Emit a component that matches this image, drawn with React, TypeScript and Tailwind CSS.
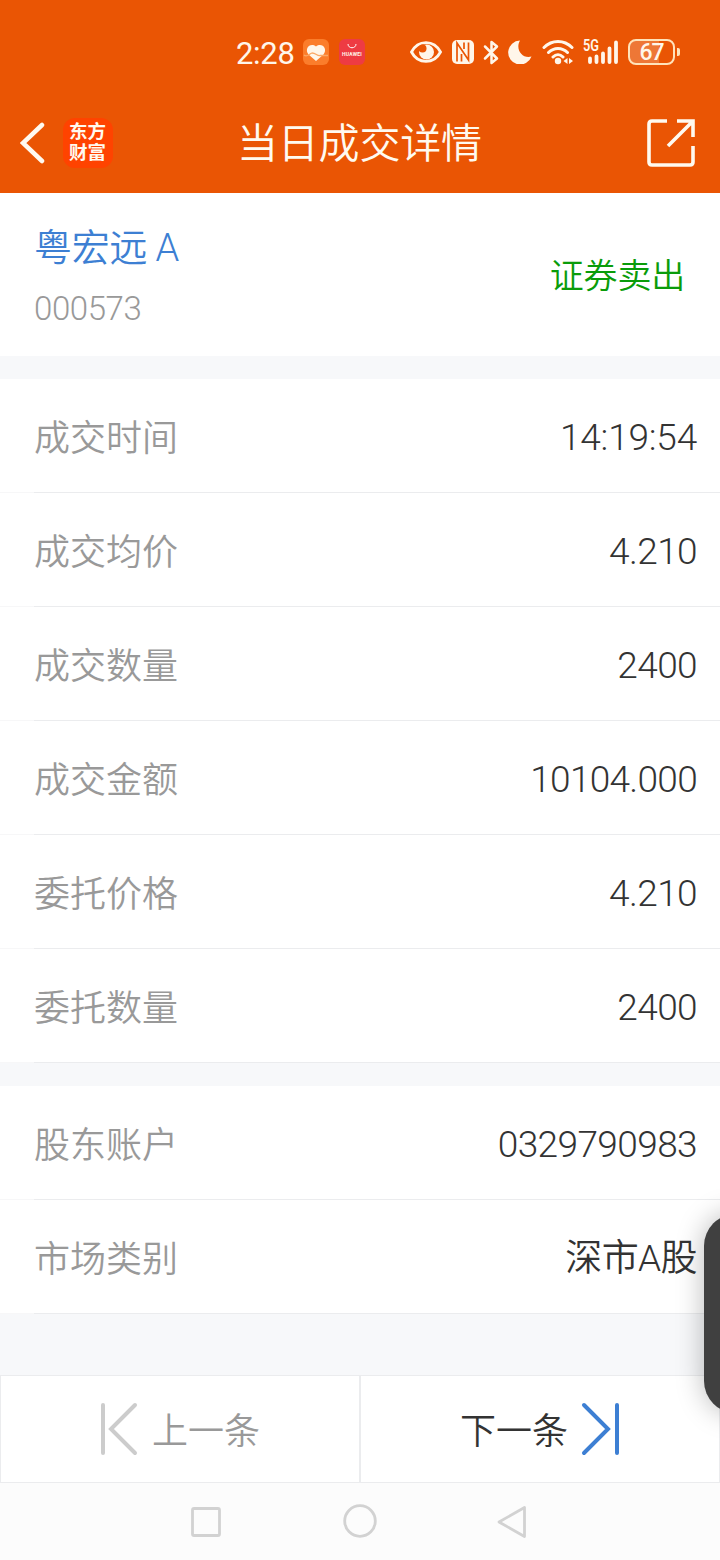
import clsx from "clsx";

const tradeRows = [
  { label: "成交时间", value: "14:19:54", spacing: "tracking-[-0.2px]" },
  { label: "成交均价", value: "4.210", spacing: "tracking-[-0.6px]" },
  { label: "成交数量", value: "2400", spacing: "tracking-[-0.6px]" },
  { label: "成交金额", value: "10104.000", spacing: "tracking-[-0.7px]" },
  { label: "委托价格", value: "4.210", spacing: "tracking-[-0.6px]" },
  { label: "委托数量", value: "2400", spacing: "tracking-[-0.6px]" },
];

const accountRows = [
  { label: "股东账户", value: "0329790983", spacing: "tracking-[-0.6px]" },
  { label: "市场类别", value: "深市A股", spacing: "tracking-[-0.6px]" },
];

function Row({ label, value, spacing }: { label: string; value: string; spacing: string }) {
  return (
    <div className="flex h-[114px] flex-col">
      <div className="flex flex-1 items-center justify-between pt-1 pr-[23px] pl-[34px]">
        <span className="pt-[2px] text-[36px] leading-none text-[#999]">{label}</span>
        <span className={clsx("text-[37px] leading-none text-[#333]", spacing)}>{value}</span>
      </div>
      <div className="flex h-px">
        <div className="w-[34px] bg-[#f7f7f8]" />
        <div className="flex-1 bg-[#ebecee]" />
      </div>
    </div>
  );
}

function StatusBar() {
  return (
    <div className="flex h-[94px] items-center pt-[10px] pl-[236px] text-[#fff6ea]">
      <span className="w-[67px] pt-[2px] text-[31px] leading-none font-normal tracking-[-0.3px]">2:28</span>
      <svg width="26" height="26" viewBox="0 0 26 26">
        <rect width="26" height="26" rx="6" fill="#fb7d2b" />
        <path d="M13 22 5.5 15.500C1 10 7 3 13 7.500c6-4.500 12 2.500 7.500 8z" fill="#fff6ea" />
        <path d="M1 16c3 3 5-1 8-2 4 0 5 3 8 2.500h8" fill="none" stroke="#fba866" strokeWidth="1.300" />
      </svg>
      <div className="ml-[10px] flex h-[26px] w-[26px] flex-col items-center rounded-[6px] bg-[#ee3b43] pt-[5px]">
        <svg width="10" height="5" viewBox="0 0 10 5" fill="none" stroke="#fff" strokeWidth="1">
          <path d="M1 0c0 5 8 5 8 0" />
        </svg>
        <span className="mt-[3px] text-[5px] leading-none font-bold tracking-[0.2px]">HUAWEI</span>
      </div>
      <svg className="ml-[45px]" width="32" height="24" viewBox="0 0 32 24">
        <path d="M1.500 12C8-.5 24-.5 30.500 12 24 24.500 8 24.500 1.500 12z" fill="none" stroke="currentColor" strokeWidth="2.800" />
        <circle cx="16.500" cy="12" r="7.500" fill="currentColor" />
        <circle cx="12.500" cy="8.500" r="4" fill="#ea5504" />
      </svg>
      <svg className="ml-[10px]" width="22" height="24" viewBox="0 0 22 24">
        <rect width="22" height="24" rx="5" fill="currentColor" />
        <path d="M5 21.500V3l11.500 17V2.500M9.500 21.500V14M12 2.500V9" fill="none" stroke="#ea5504" strokeWidth="1.700" />
      </svg>
      <svg className="ml-[9px]" width="17" height="25" viewBox="0 0 17 25" fill="none" stroke="currentColor" strokeWidth="2.500">
        <path d="m2 6.500 12 12-5.500 4.500V2L14 6.500l-12 12" strokeLinejoin="round" strokeLinecap="round" />
      </svg>
      <svg className="ml-[8px]" width="24" height="24" viewBox="0 0 24 24" fill="currentColor">
        <path d="M12 .5A12 12 0 1 0 23.500 16.500C14 19 7 9 12 .5z" />
      </svg>
      <svg className="ml-[10px]" width="32" height="26" viewBox="0 0 32 26" fill="none" stroke="currentColor" strokeWidth="3" strokeLinecap="round">
        <path d="M2 8.500c8-8 20-8 28 0M6.500 13.500c5.500-5.500 13.500-5.500 19 0M11 18c3-3 7-3 10 0" />
        <circle cx="16" cy="22" r="3.200" fill="currentColor" stroke="none" />
        <path d="m25.500 19-4 3 4 3zm1.500 0 4 3-4 3z" fill="currentColor" stroke="none" />
      </svg>
      <div className="relative ml-[13px] h-[24px] w-[30px]">
        <span className="absolute -top-[3px] -left-[4px] origin-left scale-x-[0.75] text-[17px] leading-none font-semibold">5G</span>
        <svg className="overflow-visible" width="30" height="24" viewBox="0 0 30 24" fill="none" stroke="currentColor" strokeWidth="3.800" strokeLinecap="round">
          <path d="M3 18.500v3.500M9.500 16.500v5.500M16 13.500v8.500M22.500 8.500v13.500M29 2.500v19.500" />
        </svg>
      </div>
      <div className="ml-[11px] flex h-[26px] w-[47px] items-center justify-center rounded-[8px] border-2 border-[#ffe3ba] bg-linear-to-r from-[#ee7736] from-67% to-[#ea5504] to-67%">
        <span className="text-[23px] leading-none font-medium tracking-[-1px]">67</span>
      </div>
      <div className="ml-[2px] h-[8px] w-[3px] rounded-r-[2px] bg-[#ffe3ba]" />
    </div>
  );
}

function TitleBar() {
  return (
    <div className="flex h-[97px] items-center px-5 text-[#fffaf0]">
      <svg width="25" height="42" viewBox="0 0 25 42" fill="none" stroke="currentColor" strokeWidth="4.500" strokeLinecap="round">
        <path d="M22 3 3 21l19 18" strokeLinejoin="miter" />
      </svg>
      <div className="ml-[18px] flex h-[50px] w-[50px] flex-col items-center justify-center rounded-[12px] bg-[#ff4300] pr-px text-[18.500px] leading-[21px] font-bold">
        <span>东方</span>
        <span>财富</span>
      </div>
      <h1 className="ml-[124px] pt-[4px] text-[41px] leading-none tracking-[-0.2px] whitespace-nowrap">当日成交详情</h1>
      <svg className="mr-[4px] ml-auto" width="50" height="50" viewBox="0 0 50 50" fill="none" stroke="currentColor" strokeWidth="3.600">
        <path d="M21 3H6Q3 3 3 6v38q0 3 3 3h38q3 0 3-3V28M31 3h16v16M47 3 22 28" />
      </svg>
    </div>
  );
}

export default function App() {
  return (
    <div className="relative flex h-[1560px] w-[720px] flex-col overflow-hidden bg-[#f7f8fa] font-[Roboto,'Noto_Sans_CJK_SC',sans-serif] font-[350]">
      <header className="h-[193px] bg-[#ea5504]">
        <StatusBar />
        <TitleBar />
      </header>

      <section className="flex h-[163px] justify-between bg-white pr-[35px] pl-[34px]">
        <div className="flex flex-col pt-[36px]">
          <span className="text-[38px] leading-none tracking-[-0.2px] text-[#3d7fd3]">
            粤宏远<span className="ml-[8px]">A</span>
          </span>
          <span className="mt-[25px] text-[33px] leading-none tracking-[-0.4px] text-[#999]">000573</span>
        </div>
        <span className="pt-[66px] text-[34px] leading-none tracking-[-0.2px] text-[#0a9c0a]">证券卖出</span>
      </section>

      <section className="mt-[23px] bg-white">
        {tradeRows.map((row) => (
          <Row key={row.label} {...row} />
        ))}
      </section>

      <section className="mt-[23px] bg-white">
        {accountRows.map((row) => (
          <Row key={row.label} {...row} />
        ))}
      </section>

      <div className="mt-[61px] flex h-[108px] border border-[#ebecee] bg-white text-[36px] leading-none">
        <button className="flex w-[360px] items-center border-r-2 border-[#ebecee] pl-[98px] text-[#999]">
          <svg width="40" height="54" viewBox="0 0 40 54" fill="none" stroke="#ccc" strokeWidth="4" strokeLinecap="round">
            <path d="M4 3v48M36 3 12 27l24 24" />
          </svg>
          <span className="ml-[13px] pt-[6px]">上一条</span>
        </button>
        <button className="flex flex-1 items-center pl-[99px] text-[#333]">
          <span className="pt-[6px]">下一条</span>
          <svg className="ml-[12px]" width="40" height="54" viewBox="0 0 40 54" fill="none" stroke="#3d7fd3" strokeWidth="4" strokeLinecap="round">
            <path d="M4 3l24 24L4 51M37 3v48" />
          </svg>
        </button>
      </div>

      <nav className="flex flex-1 items-center bg-[#fcfcfc] pl-[190px]">
        <svg width="340" height="36" viewBox="0 0 340 36" fill="none" stroke="#d2d2d2" strokeWidth="2.800" strokeLinejoin="round">
          <rect x="2.500" y="4.500" width="27" height="27" rx="1.500" />
          <circle cx="170" cy="17" r="15.300" />
          <path d="M334.500 3.500v29L309 18z" />
        </svg>
      </nav>

      {/* floating side panel handle */}
      <div className="absolute top-[1214px] -right-[48px] h-[199px] w-[64px] rounded-[36px] bg-[#404040] shadow-[0_0_28px_rgba(0,0,0,0.28)]" />
    </div>
  );
}
